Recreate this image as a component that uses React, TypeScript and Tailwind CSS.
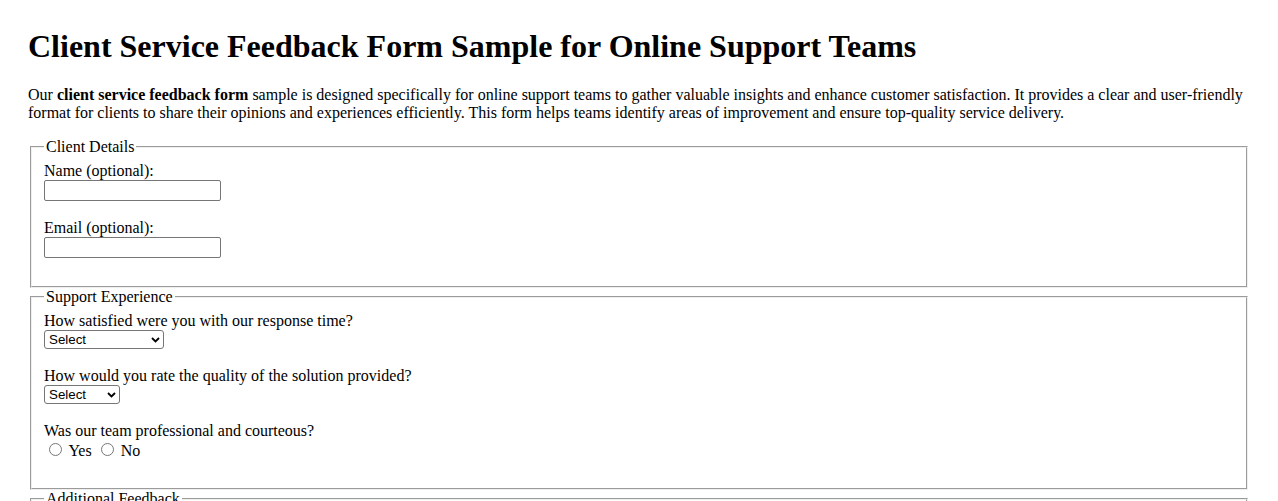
const fieldsetCls =
  "mx-[2px] pt-[5.6px] px-3 pb-[10px] border-2 [border-style:groove] border-[color:ThreeDFace]";
const legendCls = "px-[2px]";
const textInputCls =
  "w-[177px] h-[21px] border border-[#767676] rounded-[2px] px-[2px] py-[1px] bg-white font-['Liberation_Sans',Arial,sans-serif] text-[13.33px] leading-[normal]";
const selectCls =
  "appearance-none h-[19px] pl-[4px] pr-[18px] border border-[#767676] rounded-[3px] bg-white text-black font-['Liberation_Sans',Arial,sans-serif] text-[13.33px] leading-[normal]";
const radioCls = "ml-[5px] mr-[3px] mt-[3px]";

const Chevron = () => (
  <svg
    className="pointer-events-none absolute right-[4px] top-[7px]"
    width="9"
    height="6"
    viewBox="0 0 9 6"
    fill="none"
  >
    <path d="M1 1l3.5 3.5L8 1" stroke="#000" strokeWidth="1.8" />
  </svg>
);

const App = () => {
  return (
    <div className="min-h-screen bg-white px-[28px] pt-[28px] text-black font-['Liberation_Serif','Times_New_Roman',serif] text-[16px] leading-[normal]">
      <h1 className="text-[32px] font-bold mb-[21.44px]">
        Client Service Feedback Form Sample for Online Support Teams
      </h1>
      <p className="mb-4">
        Our <strong className="font-bold">client service feedback form</strong>{" "}
        sample is designed specifically for online support teams to gather
        valuable insights and enhance customer satisfaction. It provides a clear
        and user-friendly format for clients to share their opinions and
        experiences efficiently. This form helps teams identify areas of
        improvement and ensure top-quality service delivery.
      </p>
      <form>
        <fieldset className={fieldsetCls}>
          <legend className={legendCls}>Client Details</legend>
          <label htmlFor="name">Name (optional):</label>
          <br />
          <input id="name" type="text" className={textInputCls} />
          <br />
          <br />
          <label htmlFor="email">Email (optional):</label>
          <br />
          <input id="email" type="email" className={textInputCls} />
          <br />
          <br />
        </fieldset>

        <fieldset className={fieldsetCls}>
          <legend className={legendCls}>Support Experience</legend>
          <label htmlFor="response">
            How satisfied were you with our response time?
          </label>
          <br />
          <span className="relative inline-block">
            <select id="response" className={`${selectCls} w-[120px]`}>
              <option>Select</option>
              <option>Very Satisfied</option>
              <option>Satisfied</option>
              <option>Neutral</option>
              <option>Dissatisfied</option>
            </select>
            <Chevron />
          </span>
          <br />
          <br />
          <label htmlFor="quality">
            How would you rate the quality of the solution provided?
          </label>
          <br />
          <span className="relative inline-block">
            <select id="quality" className={`${selectCls} w-[76px]`}>
              <option>Select</option>
              <option>Excellent</option>
              <option>Good</option>
              <option>Fair</option>
              <option>Poor</option>
            </select>
            <Chevron />
          </span>
          <br />
          <br />
          <label>Was our team professional and courteous?</label>
          <br />
          <input type="radio" name="professional" className={radioCls} /> Yes{" "}
          <input type="radio" name="professional" className={radioCls} /> No
          <br />
          <br />
        </fieldset>

        <fieldset className={fieldsetCls}>
          <legend className={legendCls}>Additional Feedback</legend>
          <label htmlFor="comments">Any other comments or suggestions?</label>
          <br />
          <textarea
            id="comments"
            rows={4}
            cols={50}
            className="border border-[#767676] rounded-[2px] bg-white font-['Liberation_Mono',monospace] text-[13.33px]"
          />
          <br />
          <br />
        </fieldset>
      </form>
    </div>
  );
};

export default App;
